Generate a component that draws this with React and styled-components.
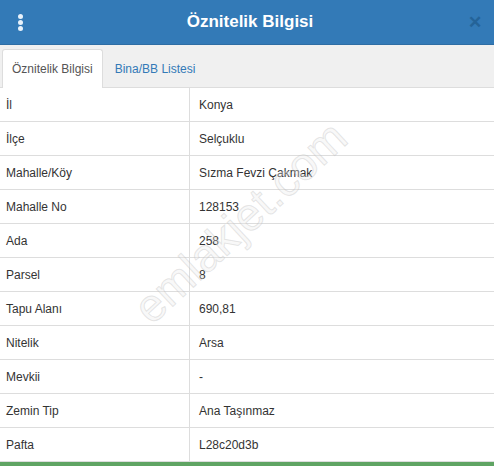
import styled, { createGlobalStyle } from 'styled-components';

const GlobalStyle = createGlobalStyle`
  html, body {
    margin: 0;
    padding: 0;
    background: #fff;
    font-family: "Liberation Sans", Arial, sans-serif;
  }
`;

const Panel = styled.div`
  width: 494px;
  height: 466px;
  overflow: hidden;
  position: relative;
  background: #fff;
`;

const Header = styled.div`
  height: 44px;
  background: #337ab7;
  display: flex;
  align-items: center;
  justify-content: space-between;
  padding: 0 12px 0 18px;
  border-bottom: 1px solid #2e6da4;
`;

const MenuDots = styled.div`
  display: flex;
  flex-direction: column;
  gap: 1px;
  width: 6px;
  span {
    width: 5px;
    height: 5px;
    border-radius: 50%;
    background: #e8f2fb;
  }
`;

const Title = styled.div`
  color: #fff;
  font-size: 17px;
  font-weight: bold;
  margin-left: 8px;
`;

const Close = styled.div`
  color: #1f5a8c;
  font-size: 17px;
  font-weight: bold;
  opacity: 0.7;
  line-height: 1;
`;

const TabBar = styled.div`
  height: 42px;
  background: #f0f0f0;
  display: flex;
  align-items: flex-end;
  padding-left: 2px;
  border-bottom: 1px solid #ddd;
`;

const Tab = styled.div`
  height: 39px;
  box-sizing: border-box;
  display: flex;
  align-items: center;
  white-space: nowrap;
  padding: 0 ${p => (p.$active ? '9px' : '11px')};
  font-size: 12px;
  color: ${p => (p.$active ? '#555' : '#337ab7')};
  background: ${p => (p.$active ? '#fff' : 'transparent')};
  border: 1px solid ${p => (p.$active ? '#ddd' : 'transparent')};
  border-bottom: none;
  border-radius: 3px 3px 0 0;
  margin-bottom: -1px;
`;

const Table = styled.table`
  width: 100%;
  border-collapse: collapse;
  font-size: 12px;
  color: #333;
  td {
    height: 33px;
    padding: 0 6px;
    border-bottom: 1px solid #ddd;
    vertical-align: middle;
  }
  td:first-child {
    width: 177px;
    border-right: 1px solid #ddd;
  }
  td:last-child {
    padding-left: 9px;
  }
`;

const BottomBar = styled.div`
  position: absolute;
  left: 0;
  right: 0;
  bottom: 0;
  height: 4px;
  background: #5fa463;
`;

const Watermark = styled.div`
  position: absolute;
  left: 240px;
  top: 222px;
  transform: translate(-50%, -50%) rotate(-43deg);
  font-size: 46px;
  color: rgba(235, 235, 235, 0.35);
  -webkit-text-stroke: 1px rgba(175, 175, 175, 0.3);
  pointer-events: none;
  white-space: nowrap;
`;

const rows = [
  ['İl', 'Konya'],
  ['İlçe', 'Selçuklu'],
  ['Mahalle/Köy', 'Sızma Fevzi Çakmak'],
  ['Mahalle No', '128153'],
  ['Ada', '258'],
  ['Parsel', '8'],
  ['Tapu Alanı', '690,81'],
  ['Nitelik', 'Arsa'],
  ['Mevkii', '-'],
  ['Zemin Tip', 'Ana Taşınmaz'],
  ['Pafta', 'L28c20d3b'],
];

export default function App() {
  return (
    <>
      <GlobalStyle />
      <Panel>
        <Header>
          <MenuDots>
            <span />
            <span />
            <span />
          </MenuDots>
          <Title>Öznitelik Bilgisi</Title>
          <Close>✕</Close>
        </Header>
        <TabBar>
          <Tab $active>Öznitelik Bilgisi</Tab>
          <Tab>Bina/BB Listesi</Tab>
        </TabBar>
        <Table>
          <tbody>
            {rows.map(([k, v]) => (
              <tr key={k}>
                <td>{k}</td>
                <td>{v}</td>
              </tr>
            ))}
          </tbody>
        </Table>
        <Watermark>emlakjet.com</Watermark>
        <BottomBar />
      </Panel>
    </>
  );
}
